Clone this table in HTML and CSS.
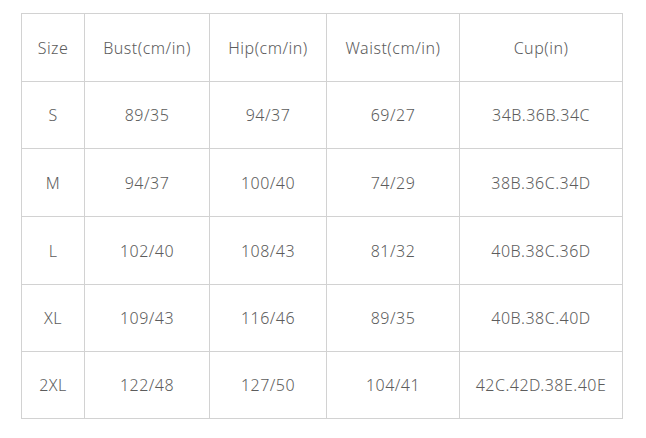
FILE: index.html
```html
<!DOCTYPE html>
<html>
<head>
<meta charset="utf-8">
<link rel="stylesheet" href="styles.css">
</head>
<body>
<table class="size-table">
  <colgroup>
    <col class="c1"><col class="c2"><col class="c3"><col class="c4"><col class="c5">
  </colgroup>
  <tr class="r68"><td>Size</td><td>Bust(cm/in)</td><td>Hip(cm/in)</td><td>Waist(cm/in)</td><td>Cup(in)</td></tr>
  <tr class="r67"><td>S</td><td>89/35</td><td>94/37</td><td>69/27</td><td>34B.36B.34C</td></tr>
  <tr class="r68"><td>M</td><td>94/37</td><td>100/40</td><td>74/29</td><td>38B.36C.34D</td></tr>
  <tr class="r68"><td>L</td><td>102/40</td><td>108/43</td><td>81/32</td><td>40B.38C.36D</td></tr>
  <tr class="r67"><td>XL</td><td>109/43</td><td>116/46</td><td>89/35</td><td>40B.38C.40D</td></tr>
  <tr class="r67"><td>2XL</td><td>122/48</td><td>127/50</td><td>104/41</td><td>42C.42D.38E.40E</td></tr>
</table>
</body>
</html>
```
FILE: styles.css
```css
html, body {
  margin: 0;
  background: #ffffff;
}
body {
  padding: 13px 21px;
}
.size-table {
  border-collapse: collapse;
  table-layout: fixed;
  width: 601px;
  font-family: "Noto Sans", sans-serif;
  font-size: 16px;
  font-weight: 300;
  letter-spacing: 0.5px;
  color: #5c5c5c;
}
.size-table td {
  border: 1px solid #d2d2d2;
  text-align: center;
  vertical-align: middle;
  padding: 0;
}
.c1 { width: 63px; }
.c2 { width: 125px; }
.c3 { width: 117px; }
.c4 { width: 133px; }
.c5 { width: 163px; }
.r68 td { height: 67px; }
.r67 td { height: 66px; }
```
